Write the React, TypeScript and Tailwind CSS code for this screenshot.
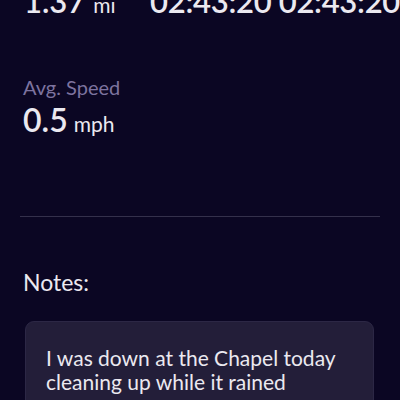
export default function App() {
  return (
    <div className="h-[400px] w-[400px] overflow-hidden bg-[#0b0623] font-['Lato','Open_Sans',sans-serif] text-[#ebe9f0]">
      <div className="-mt-[19px] flex items-baseline whitespace-nowrap pl-6">
        <div className="flex w-[132px] items-baseline">
          <span className="text-[31px] font-semibold leading-[40px]">1.37</span>
          <span className="ml-[8px] text-[21px]">mi</span>
        </div>
        <span className="text-[31px] font-semibold leading-[40px] tracking-[-0.3px]">02:43:20 02:43:20</span>
      </div>

      <div className="mt-[53px] pl-[23px]">
        <div className="text-[20px] leading-[26px] text-[#7d739f]">Avg. Speed</div>
        <div className="mt-[1px] flex items-baseline">
          <span className="text-[32px] font-semibold leading-[38px]">0.5</span>
          <span className="ml-[6px] text-[21px]">mph</span>
        </div>
      </div>

      <div className="mx-5 mt-[76px] h-px bg-[#34304b]" />

      <div className="mt-[51px] pl-[23px] text-[23px] leading-[28px]">Notes:</div>

      <div className="ml-[25px] mr-[26px] mt-[25px] rounded-[9px] border border-[#2c2745] bg-[#231e39] px-[20px] pb-6 pt-[24px] text-[21px] leading-[24px]">
        I was down at the Chapel today cleaning up while it rained
      </div>
    </div>
  )
}
